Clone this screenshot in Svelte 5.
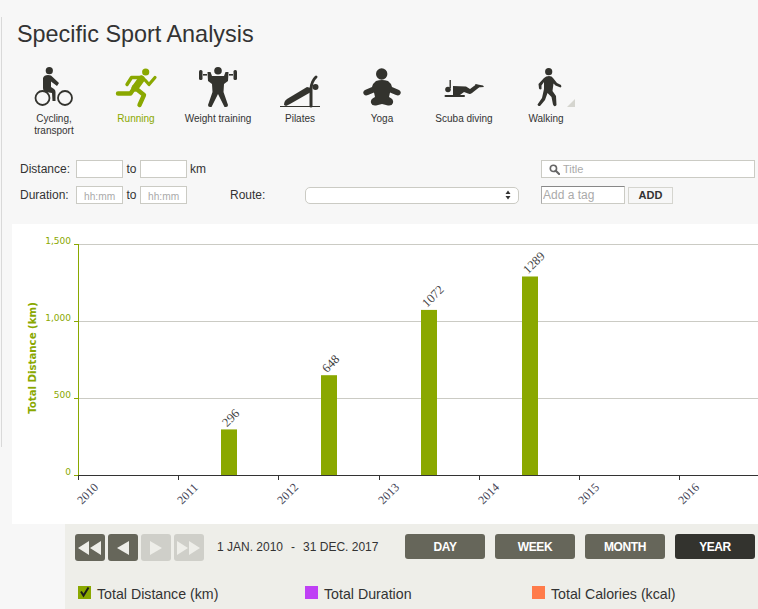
<script lang="ts">
  // Specific sport analysis page: sport picker, filters, yearly chart, controls.
  const sports = [
    { id: 'cycling', label: 'Cycling,\ntransport', box: '24 66 60 44' },
    { id: 'running', label: 'Running', box: '106 66 60 44', active: true },
    { id: 'weights', label: 'Weight training', box: '188 66 60 44' },
    { id: 'pilates', label: 'Pilates', box: '270 66 60 44' },
    { id: 'yoga', label: 'Yoga', box: '352 66 60 44' },
    { id: 'scuba', label: 'Scuba diving', box: '434 66 60 44' },
    { id: 'walking', label: 'Walking', box: '516 66 60 44' },
  ];

  const baseY = 475;
  const kmPerPx = 1500 / 231;
  const bars = [
    { x: 221, value: 296 },
    { x: 321, value: 648 },
    { x: 421, value: 1072 },
    { x: 522, value: 1289 },
  ];
  const years = [
    { x: 78, label: '2010' },
    { x: 178, label: '2011' },
    { x: 278, label: '2012' },
    { x: 379, label: '2013' },
    { x: 479, label: '2014' },
    { x: 579, label: '2015' },
    { x: 679, label: '2016' },
  ];
  const yTicks = [
    { y: 244, label: '1,500' },
    { y: 321, label: '1,000' },
    { y: 398, label: '500' },
    { y: 475, label: '0' },
  ];
  const ranges = ['DAY', 'WEEK', 'MONTH', 'YEAR'];
  const legend = [
    { label: 'Total Distance (km)', color: '#8aa800', checked: true, width: 227 },
    { label: 'Total Duration', color: '#bf40f5', checked: false, width: 227 },
    { label: 'Total Calories (kcal)', color: '#ff7b4a', checked: false, width: 200 },
  ];
</script>

<div class="page">
  <div class="rail"></div>
  <div class="main">
    <h1>Specific Sport Analysis</h1>

    <div class="sports">
      {#each sports as s}
        <div class="sport" class:active={s.active}>
          <svg viewBox={s.box} width="60" height="44" aria-hidden="true">
            {#if s.id === 'cycling'}
              <circle cx="49.3" cy="70.7" r="3.6" />
              <path d="M43 78 Q44 75 48 75 L51 75.500 L59 83 L57 86 L51 81.500 L51 87 L54 89 Q55.500 90 55.500 92 L55.500 101 L52.500 101 L52 93 L46 92 Q43 91.500 43 88 Z" />
              <g class="line" stroke-width="1.800">
                <circle cx="42.500" cy="98" r="7" />
                <circle cx="65" cy="98" r="7" />
              </g>
            {:else if s.id === 'running'}
              <circle cx="145.700" cy="72" r="3.600" />
              <g class="line">
                <path d="M127 84.500 L131.500 77.500 L142 77.500" stroke-width="3.400" />
                <path d="M141.500 79 L135 88" stroke-width="7" />
                <path d="M145 80 L149 84.500 L155 77.500" stroke-width="3.200" />
                <path d="M135 87 L130.500 93.500 L118 93.500" stroke-width="4.400" />
                <path d="M134 87 L144 95 L139.500 105" stroke-width="4.400" />
              </g>
            {:else if s.id === 'weights'}
              <circle cx="218" cy="70.700" r="3.800" />
              <rect x="199" y="70" width="3.500" height="10" rx="1.500" />
              <rect x="233.500" y="70" width="3.500" height="10" rx="1.500" />
              <rect x="203" y="74" width="4" height="1.600" />
              <rect x="229" y="74" width="4" height="1.600" />
              <path d="M207.500 72 L210.500 72 L212 76 L224 76 L225.500 72 L228.500 72 L228 81 L224 84 L223.500 92 L228 105 Q228 107 226 107 L224.500 107 L218 94 L211.500 107 L210 107 Q208 107 208 105 L212.500 92 L212 84 L208 81 Z" />
            {:else if s.id === 'pilates'}
              <rect x="280" y="106" width="40" height="1" />
              <path d="M284 105 Q284 101 287 99 L307 87 L311 88 L311 92 L290 104 L286 106 Z" />
              <circle cx="315.500" cy="87" r="3" />
              <g class="line">
                <path d="M311 106 L311 89 Q311.500 81 316 77" stroke-width="3" />
              </g>
            {:else if s.id === 'yoga'}
              <circle cx="381.700" cy="74" r="5.700" />
              <path d="M376 81 Q382 79 388 81 Q391 83 392 87 L399 90 Q402 92 400 94.500 Q398.500 96 396 95 L390 92.500 L389 97 L375 97 L374 92.500 L368 95 Q365.500 96 364 94.500 Q362 92 365 90 L372 87 Q373 83 376 81 Z" />
              <path d="M375 97 L389 97 Q394 99 393 103 Q392 106 388 105.500 L382 104 L376 105.500 Q372 106 371 103 Q370 99 375 97 Z" />
            {:else if s.id === 'scuba'}
              <rect x="449.500" y="80" width="1.400" height="8" />
              <circle cx="448" cy="89.500" r="2.800" />
              <path d="M453 86 L466 86.500 L470 89 L476 84.500 L478 85 L479 87.500 L472 93 Q470 94.500 468 93.500 L464 92 L460 95 L453 95 Z" />
              <path d="M475 84 L483 85.500 L484 87 L477 87.500 Z" />
              <rect x="444.500" y="95" width="20.500" height="2" rx="1" />
            {:else if s.id === 'walking'}
              <circle cx="548.700" cy="71.700" r="3.600" />
              <path d="M544 78 Q546 76 549 76 Q552 76 553 78 L557 83 L561 85 Q562 87 560.500 87.500 L555.500 85.500 L553.500 83.500 L552.500 91 L556 96 L556.500 105 Q556 106.500 554 106 L553 104.500 L551.500 97 L547.500 93 L545 100 L540 106 Q538 106.500 537.500 104.500 L542 98 L544 89 L544 82 L541.500 85.500 L541.500 89 Q540 90 539 88.500 L538.500 84 Z" />
              <path class="corner" d="M575 99 L575 107 L567 107 Z" />
            {/if}
          </svg>
          <span class="sport-label">{s.label}</span>
        </div>
      {/each}
    </div>

    <div class="filters">
      <div class="filter-row">
        <span class="field-label">Distance:</span>
        <input class="num" type="text" />
        <span class="to">to</span>
        <input class="num" type="text" />
        <span class="unit">km</span>
        <div class="search">
          <svg viewBox="0 0 12 12" width="11" height="11" aria-hidden="true">
            <circle cx="4.800" cy="4.800" r="3.400" fill="none" stroke="#666" stroke-width="1.800" />
            <path d="M7.400 7.400 L11 11" stroke="#666" stroke-width="2.200" stroke-linecap="round" />
          </svg>
          <span>Title</span>
        </div>
      </div>
      <div class="filter-row second">
        <span class="field-label">Duration:</span>
        <input class="num" type="text" placeholder="hh:mm" />
        <span class="to">to</span>
        <input class="num" type="text" placeholder="hh:mm" />
        <span class="route-label">Route:</span>
        <div class="select">
          <svg viewBox="0 0 6 10" width="6" height="10" aria-hidden="true">
            <path d="M3 0.500 L5.500 4 L0.500 4 Z M3 9.500 L5.500 6 L0.500 6 Z" fill="#333" />
          </svg>
        </div>
        <input class="tag" type="text" placeholder="Add a tag" />
        <button class="add" type="button">ADD</button>
      </div>
    </div>

    <div class="chart">
      <svg viewBox="12 224 746 300" width="746" height="300" aria-label="Total distance per year">
        {#each yTicks as t}
          {#if t.y !== baseY}
            <line x1="78" x2="758" y1={t.y + 0.5} y2={t.y + 0.5} stroke="#cbcbc4" />
          {/if}
          <line x1="74" x2="78" y1={t.y + 0.5} y2={t.y + 0.5} stroke="#8aa800" />
          <text class="y-label" x="71" y={t.y}>{t.label}</text>
        {/each}
        <line x1="78.500" x2="78.500" y1="244" y2="475" stroke="#8aa800" />
        <text class="y-title" transform="translate(36 358) rotate(-90)">Total Distance (km)</text>

        {#each bars as b}
          {@const h = b.value / kmPerPx}
          <rect x={b.x} y={baseY - h} width="16" height={h} fill="#8aa800" />
          <text class="value" transform="translate({b.x + 6} {baseY - h - 2}) rotate(-45)">{b.value}</text>
        {/each}

        <line x1="78" x2="758" y1="475.500" y2="475.500" stroke="#333" />
        {#each years as y}
          <line x1={y.x + 0.5} x2={y.x + 0.5} y1="475" y2="480" stroke="#333" />
          <text class="year" transform="translate({y.x + 4} 505) rotate(-45)">{y.label}</text>
        {/each}
      </svg>
    </div>

    <div class="controls">
      <div class="control-row">
        <div class="steps">
          <button class="step" type="button" aria-label="First">
            <svg viewBox="0 0 24 14" width="24" height="14"><path d="M0 7 L11 0 L11 14 Z M12 7 L23 0 L23 14 Z" /></svg>
          </button>
          <button class="step" type="button" aria-label="Previous">
            <svg viewBox="0 0 12 14" width="12" height="14"><path d="M0 7 L12 0 L12 14 Z" /></svg>
          </button>
          <button class="step off" type="button" aria-label="Next">
            <svg viewBox="0 0 12 14" width="12" height="14"><path d="M12 7 L0 0 L0 14 Z" /></svg>
          </button>
          <button class="step off" type="button" aria-label="Last">
            <svg viewBox="0 0 24 14" width="24" height="14"><path d="M11 7 L0 0 L0 14 Z M23 7 L12 0 L12 14 Z" /></svg>
          </button>
        </div>
        <div class="dates">
          <span>1 JAN. 2010</span>
          <span>-</span>
          <span>31 DEC. 2017</span>
        </div>
        <div class="ranges">
          {#each ranges as r}
            <button class="range" class:on={r === 'YEAR'} type="button">{r}</button>
          {/each}
        </div>
      </div>
      <div class="legend">
        {#each legend as l}
          <div class="legend-item" style="width: {l.width}px">
            <span class="swatch" style="background: {l.color}">
              {#if l.checked}
                <svg viewBox="0 0 13 13" width="13" height="13" aria-hidden="true">
                  <path d="M3 5.500 L5.500 9.500 L10.500 1.500" fill="none" stroke="#1c1c1c" stroke-width="2" />
                </svg>
              {/if}
            </span>
            <span>{l.label}</span>
          </div>
        {/each}
      </div>
    </div>
  </div>
</div>

<style>
  :global(body) {
    background: #f7f7f7;
    font-family: "Liberation Sans", Arial, sans-serif;
    color: #333;
  }
  .page {
    display: flex;
    width: 758px;
    height: 609px;
    overflow: hidden;
  }
  .rail {
    flex: none;
    width: 1px;
    height: 430px;
    margin: 17px 0 0 1px;
    background: #d9d9d9;
  }
  .main {
    flex: none;
    width: 756px;
  }
  h1 {
    margin: 0;
    padding: 20px 0 0 15px;
    height: 66px;
    box-sizing: border-box;
    font-size: 23.4px;
    line-height: 28px;
    font-weight: 400;
    color: #333;
  }
  .sports {
    display: flex;
    height: 94px;
    padding-left: 11px;
  }
  .sport {
    flex: none;
    width: 82px;
    display: flex;
    flex-direction: column;
    align-items: center;
  }
  .sport svg {
    fill: #33332e;
  }
  .sport .line {
    fill: none;
    stroke: #33332e;
    stroke-linecap: round;
    stroke-linejoin: round;
  }
  .sport .corner {
    fill: #d5d5cf;
  }
  .sport.active svg {
    fill: #8aa800;
  }
  .sport.active .line {
    stroke: #8aa800;
  }
  .sport-label {
    margin-top: 3px;
    font-size: 10px;
    line-height: 12px;
    text-align: center;
    white-space: pre-line;
    color: #333;
  }
  .sport.active .sport-label {
    color: #8aa800;
  }
  .filters {
    height: 64px;
    padding-left: 18px;
    font-size: 12px;
  }
  .filter-row {
    display: flex;
    align-items: center;
    height: 18px;
  }
  .filter-row.second {
    margin-top: 8px;
  }
  .field-label {
    width: 56px;
    flex: none;
  }
  input {
    box-sizing: border-box;
    margin: 0;
    font-family: inherit;
    outline: none;
  }
  input::placeholder {
    color: #aaa;
  }
  .num {
    width: 47px;
    height: 18px;
    padding: 2px 0 0 7px;
    border: 1px solid #cbcbc4;
    background: #fff;
    font-size: 10.200px;
  }
  .to {
    width: 17px;
    text-align: center;
  }
  .unit {
    width: 354px;
    padding-left: 3px;
    box-sizing: border-box;
  }
  .search {
    display: flex;
    align-items: center;
    gap: 3px;
    box-sizing: border-box;
    width: 214px;
    height: 18px;
    padding-left: 7px;
    border: 1px solid #cbcbc4;
    background: #fff;
    font-size: 11px;
    color: #aaa;
  }
  .route-label {
    flex: none;
    width: 75px;
    margin-left: 43px;
  }
  .select {
    display: flex;
    align-items: center;
    justify-content: flex-end;
    box-sizing: border-box;
    width: 214px;
    height: 17px;
    padding-right: 7px;
    border: 1px solid #cbcbc4;
    border-radius: 5px;
    background: #fff;
  }
  .tag {
    width: 84px;
    height: 18px;
    margin-left: 22px;
    padding: 0 1px;
    border: 1px solid #cbcbc4;
    border-top-color: #888;
    border-left-color: #aaa;
    background: #fff;
    font-size: 12px;
  }
  .add {
    box-sizing: border-box;
    width: 45px;
    height: 17px;
    margin-left: 3px;
    padding: 0;
    border: 1px solid #d5d5cf;
    background: #f7f7f7;
    font: bold 11px "Liberation Sans", Arial, sans-serif;
    color: #333;
  }
  .chart {
    margin-left: 10px;
    height: 300px;
    background: #fff;
  }
  .chart svg {
    display: block;
  }
  .y-label {
    font: 9px "DejaVu Sans", sans-serif;
    fill: #8aa800;
    text-anchor: end;
  }
  .y-title {
    font: bold 10.200px "DejaVu Sans", sans-serif;
    fill: #8aa800;
    text-anchor: middle;
  }
  .value {
    font: 12.500px "Liberation Serif", serif;
    fill: #444;
  }
  .year {
    font: 12px "Liberation Serif", serif;
    fill: #445;
  }
  .controls {
    margin-left: 63px;
    height: 85px;
    padding: 10px 3px 0 10px;
    box-sizing: border-box;
    background: #eeeee9;
  }
  .control-row {
    display: flex;
    align-items: flex-start;
    height: 52px;
  }
  .steps {
    display: flex;
    gap: 3px;
    width: 142px;
    flex: none;
  }
  .step {
    display: flex;
    align-items: center;
    justify-content: center;
    width: 30px;
    height: 27px;
    padding: 0;
    border: 0;
    border-radius: 3px;
    background: #66665a;
  }
  .step svg {
    fill: #eeeee9;
  }
  .step.off {
    background: #cfcfc9;
  }
  .dates {
    display: flex;
    gap: 8px;
    flex: none;
    width: 188px;
    font-size: 12px;
    line-height: 26px;
    color: #333;
  }
  .ranges {
    display: flex;
    gap: 10px;
  }
  .range {
    width: 80px;
    height: 25px;
    padding: 0;
    border: 0;
    border-radius: 3px;
    background: #66665a;
    color: #fff;
    font: bold 12px "Liberation Sans", Arial, sans-serif;
    letter-spacing: -0.4px;
  }
  .range.on {
    background: #33332e;
  }
  .legend {
    display: flex;
    padding-left: 3px;
    font-size: 14.200px;
    color: #333;
  }
  .legend-item {
    display: flex;
    align-items: center;
    gap: 6px;
    flex: none;
  }
  .swatch {
    flex: none;
    width: 13px;
    height: 13px;
    margin-top: -3px;
  }
  .swatch svg {
    display: block;
  }
</style>
